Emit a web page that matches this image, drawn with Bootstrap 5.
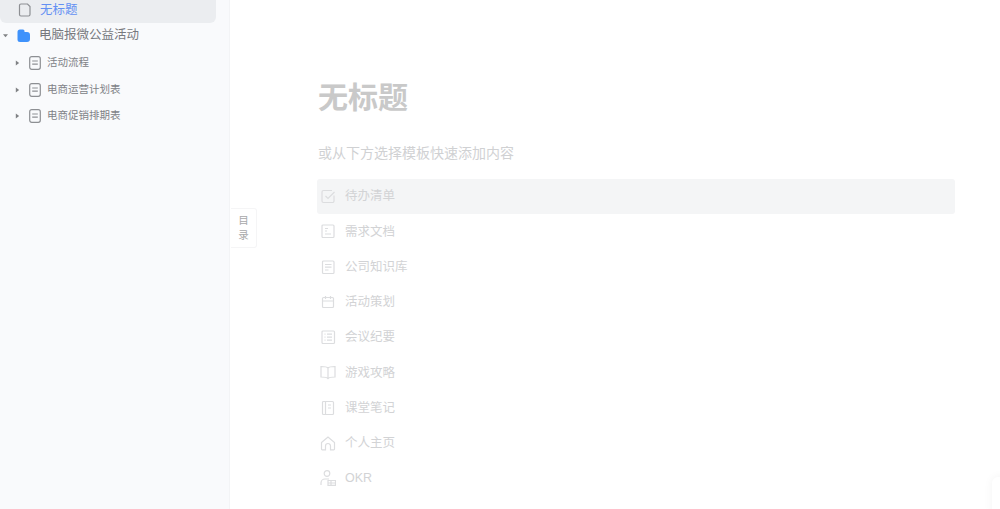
<!DOCTYPE html>
<html lang="zh">
<head>
<meta charset="utf-8">
<title>无标题</title>
<link href="https://cdn.jsdelivr.net/npm/bootstrap@5.3.0/dist/css/bootstrap.min.css" rel="stylesheet">
<style>
html,body{height:509px;overflow:hidden;background:#fff;}
body{font-family:"Liberation Sans","Noto Sans CJK SC",sans-serif;position:relative;}
.side{width:230px;height:509px;background:#f9fafc;border-right:1px solid #f3f4f6;flex:none;}
.tree-sel{width:216px;height:23px;background:#ebedf0;border-radius:0 0 6px 6px;padding-left:18px;padding-bottom:2px;color:#6390f3;font-size:12.5px;}
.tree-sel svg{margin-bottom:2px;}
.tree-top{height:26px;margin-top:-1px;padding-left:3px;font-size:12.5px;color:#77797e;margin-bottom:2px;}
.tree-sub{height:26.5px;padding-left:15px;font-size:10.5px;color:#808287;}
.tree-sub .lbl{margin-left:6px;}
.tw{width:5px;flex:none;}
.lbl{margin-left:8px;}
.fold{margin-left:8px;}
.doc{margin-left:9px;}
.main-col{padding:78px 45px 0 87px;}
.pg-title{font-size:30px;font-weight:700;color:#c9c9c9;line-height:40px;margin:0 0 0 1px;}
.pg-sub{font-size:14px;color:#d0d1d3;line-height:20px;margin:25px 0 16px 1px;}
.tpl{height:35.25px;padding-left:3px;font-size:12.5px;color:#d2d3d5;border-radius:3px;}
.tpl-on{background:#f4f5f6;}
.tpl svg{width:16px;height:16px;flex:none;margin-right:9px;margin-bottom:1px;}
.toc-tab{position:absolute;left:231px;top:208px;width:26px;height:40px;background:#fff;border:1px solid #f5f5f6;border-left:0;border-radius:0 3px 3px 0;font-size:10.5px;line-height:15px;color:#a8a8aa;padding-top:4px;text-align:center;}
.corner{position:absolute;left:992px;top:477px;width:30px;height:40px;background:#fff;border-radius:6px;box-shadow:0 0 10px rgba(0,0,0,.05);}
.ic{fill:none;stroke:#dcdddf;stroke-width:1.2;}
.ic2{fill:none;stroke:#8d8f93;stroke-width:1.2;}
</style>
</head>
<body>
<div class="d-flex">
  <aside class="side">
    <div class="tree-sel d-flex align-items-center">
      <svg width="14" height="14" viewBox="0 0 14 14"><path class="ic2" d="M3 1h6.500L12 3.500v8a1.500 1.500 0 0 1-1.500 1.500h-7.500a1.500 1.500 0 0 1-1.500-1.500v-9A1.500 1.500 0 0 1 3 1z"/></svg>
      <span class="lbl">无标题</span>
    </div>
    <div class="tree-top d-flex align-items-center">
      <svg class="tw" viewBox="0 0 6 6" height="5"><path d="M0 1.500h6L3 5z" fill="#808285"/></svg>
      <svg class="fold" width="15" height="15" viewBox="0 0 15 15"><path d="M1.500 4a2.500 2.500 0 0 1 2.500-2.500H7a1.500 1.500 0 0 1 1.500 1.500v1H11a3 3 0 0 1 3 3V11a3 3 0 0 1-3 3H4a2.500 2.500 0 0 1-2.500-2.500z" fill="#3f92fb"/></svg>
      <span class="lbl">电脑报微公益活动</span>
    </div>
    <div class="tree-sub d-flex align-items-center">
      <svg class="tw" viewBox="0 0 6 6" height="6"><path d="M1 0l4 3-4 3z" fill="#808285"/></svg>
      <svg class="doc" width="12" height="14" viewBox="0 0 12 14"><rect class="ic2" x=".7" y=".7" width="10.600" height="12.600" rx="2"/><path class="ic2" d="M3.200 5h5.600M3.200 8.200h5.600"/></svg>
      <span class="lbl">活动流程</span>
    </div>
    <div class="tree-sub d-flex align-items-center">
      <svg class="tw" viewBox="0 0 6 6" height="6"><path d="M1 0l4 3-4 3z" fill="#808285"/></svg>
      <svg class="doc" width="12" height="14" viewBox="0 0 12 14"><rect class="ic2" x=".7" y=".7" width="10.600" height="12.600" rx="2"/><path class="ic2" d="M3.200 5h5.600M3.200 8.200h5.600"/></svg>
      <span class="lbl">电商运营计划表</span>
    </div>
    <div class="tree-sub d-flex align-items-center">
      <svg class="tw" viewBox="0 0 6 6" height="6"><path d="M1 0l4 3-4 3z" fill="#808285"/></svg>
      <svg class="doc" width="12" height="14" viewBox="0 0 12 14"><rect class="ic2" x=".7" y=".7" width="10.600" height="12.600" rx="2"/><path class="ic2" d="M3.200 5h5.600M3.200 8.200h5.600"/></svg>
      <span class="lbl">电商促销排期表</span>
    </div>
  </aside>
  <main class="flex-grow-1 main-col">
    <h1 class="pg-title">无标题</h1>
    <p class="pg-sub">或从下方选择模板快速添加内容</p>
    <div class="tpl tpl-on d-flex align-items-center"><svg viewBox="0 0 16 16"><path class="ic" d="M14 7.500V13a1.500 1.500 0 0 1-1.500 1.500h-9A1.500 1.500 0 0 1 2 13V4a1.500 1.500 0 0 1 1.500-1.500H12"/><path class="ic" d="M5.500 8l2.500 2.500L14.500 4"/></svg><span>待办清单</span></div>
    <div class="tpl d-flex align-items-center"><svg viewBox="0 0 16 16"><rect class="ic" x="2" y="2" width="12" height="12.500" rx="1"/><path class="ic" d="M5 5.500h3M5 8h2M5 11h6"/></svg><span>需求文档</span></div>
    <div class="tpl d-flex align-items-center"><svg viewBox="0 0 16 16"><rect class="ic" x="2.500" y="2" width="11.500" height="12.500" rx="1"/><path class="ic" d="M5 5.500h6.500M5 8.200h6.500M5 11h3.500"/></svg><span>公司知识库</span></div>
    <div class="tpl d-flex align-items-center"><svg viewBox="0 0 16 16"><rect class="ic" x="2.500" y="3.500" width="11" height="10" rx="1"/><path class="ic" d="M2.500 7h11M5.500 2v3M10.500 2v3"/></svg><span>活动策划</span></div>
    <div class="tpl d-flex align-items-center"><svg viewBox="0 0 16 16"><rect class="ic" x="2" y="2" width="12.500" height="12.500" rx="1"/><path class="ic" d="M4.500 5.200h1M7 5.200h5M4.500 8.200h1M7 8.200h5M4.500 11.200h1M7 11.200h5"/></svg><span>会议纪要</span></div>
    <div class="tpl d-flex align-items-center"><svg viewBox="0 0 16 16"><path class="ic" d="M8 4c-1-1.200-2.500-1.500-7-1.500v10.500c4.500 0 6 .3 7 1.500 1-1.200 2.500-1.500 7-1.500V2.500C10.500 2.500 9 2.800 8 4zM8 4v10.500"/></svg><span>游戏攻略</span></div>
    <div class="tpl d-flex align-items-center"><svg viewBox="0 0 16 16"><rect class="ic" x="2.500" y="1.500" width="11" height="13" rx="1"/><path class="ic" d="M5.500 1.500v13M8 5h3M8 8h3"/></svg><span>课堂笔记</span></div>
    <div class="tpl d-flex align-items-center"><svg viewBox="0 0 16 16"><path class="ic" d="M1.500 7.500L8 2l6.500 5.500V14a.8.8 0 0 1-.8.800H10.500V11a2.500 2.500 0 0 0-5 0v3.800H2.300a.8.8 0 0 1-.8-.8z"/></svg><span>个人主页</span></div>
    <div class="tpl d-flex align-items-center"><svg viewBox="0 0 16 16"><circle class="ic" cx="7" cy="3.500" r="2.800"/><path class="ic" d="M1 15v-2a4 4 0 0 1 4-4h4"/><path class="ic" d="M8 10.500h7.500v4.800H8zM8 13h7.500M11 10.500v4.800"/></svg><span>OKR</span></div>
  </main>
</div>
<div class="toc-tab">目<br>录</div>
<div class="corner"></div>
<script src="https://cdn.jsdelivr.net/npm/bootstrap@5.3.0/dist/js/bootstrap.bundle.min.js"></script>
</body>
</html>
